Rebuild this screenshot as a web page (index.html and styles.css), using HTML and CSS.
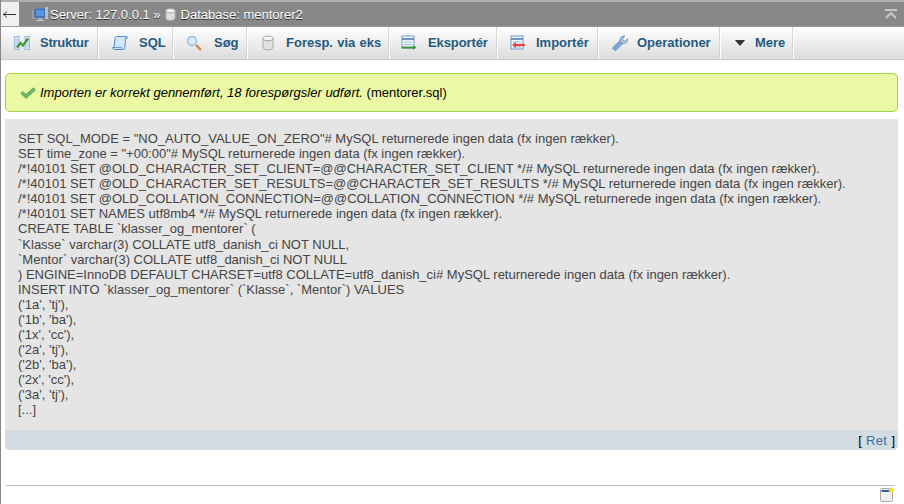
FILE: index.html
```html
<!DOCTYPE html>
<html lang="da">
<head>
<meta charset="utf-8">
<title>phpMyAdmin</title>
<link rel="stylesheet" href="styles.css">
</head>
<body>
<div class="top">
  <a class="back"><svg class="back-ic" viewBox="0 0 13 7"><path d="M0 3.500h13" stroke="#333" stroke-width="1"/><path d="M4 .5L.8 3.500 4 6.500" fill="none" stroke="#333"/></svg></a>
  <svg class="ic16" viewBox="0 0 16 16"><rect x="0" y="4" width="3" height="9" fill="#9aa0a8"/><rect x="2" y="2" width="12" height="10" fill="#3d6fb8" stroke="#8a929c"/><rect x="4" y="4" width="8" height="6" fill="#5b93dd"/><rect x="13" y="1" width="3" height="12" fill="#b8bec6"/><rect x="6" y="12" width="4" height="2" fill="#a8aeb6"/><rect x="4" y="14" width="8" height="1" fill="#c8ccd2"/></svg>
  <span class="crumb">Server: 127.0.0.1 »</span>
  <svg class="ic12" viewBox="0 0 12 14"><ellipse cx="6" cy="3" rx="5" ry="2.400" fill="#f4f4f4" stroke="#aaa"/><path d="M1 3v8c0 1.400 2.200 2.400 5 2.400s5-1 5-2.400V3c0 1.400-2.200 2.400-5 2.400S1 4.400 1 3z" fill="#dedede" stroke="#aaa"/></svg>
  <span class="crumb">Database: mentorer2</span>
  <svg class="collapse" viewBox="0 0 12 10"><path d="M0 1h12" stroke="#c8c8c8" stroke-width="2"/><path d="M1 9l5-5 5 5" fill="none" stroke="#c8c8c8" stroke-width="2"/></svg>
</div>
<nav class="tabs">
  <a class="tab t1"><svg class="ic" viewBox="0 0 16 16"><rect x=".5" y="1.500" width="4.500" height="13" fill="#d5e4f6" stroke="#8fb0d8" stroke-width=".8"/><rect x="11" y="1.500" width="4.500" height="13" fill="#d5e4f6" stroke="#8fb0d8" stroke-width=".8"/><path d="M1 5h4M1 8h4M1 11h4M11 5h4M11 8h4M11 11h4" stroke="#9fbde0" stroke-width=".7"/><path d="M3 12.500L6.500 8l2.500 2.500L14 3.500" fill="none" stroke="#3f9a3a" stroke-width="2.200"/></svg><span>Struktur</span></a>
  <a class="tab t2"><svg class="ic" viewBox="0 0 16 16"><path d="M4.500 1.500c-1 0-1.500 1-1.500 2l-1 9H.7c0 1.300.8 2 2 2H11c1 0 1.700-.7 1.800-2l1-9.500h1.700c0-1-.7-1.500-1.500-1.500z" fill="#d3e5f9" stroke="#4f8ad0"/><path d="M2 12.500h7.500c0 1 .3 1.500 1 2" fill="none" stroke="#4f8ad0" stroke-width=".8"/></svg><span>SQL</span></a>
  <a class="tab t3"><svg class="ic" viewBox="0 0 16 16"><circle cx="6" cy="6" r="4.500" fill="#d8e9fa" stroke="#9db9d6" stroke-width="1.300"/><path d="M10 10l5 5" stroke="#c98a45" stroke-width="2.400"/></svg><span>Søg</span></a>
  <a class="tab t4"><svg class="ic" viewBox="0 0 16 16"><ellipse cx="8" cy="3.500" rx="5" ry="2.400" fill="#f4f4f4" stroke="#aaa"/><path d="M3 3.500v9c0 1.400 2.200 2.400 5 2.400s5-1 5-2.400v-9c0 1.400-2.200 2.400-5 2.400s-5-1-5-2.400z" fill="#e2e2e2" stroke="#aaa"/></svg><span>Foresp. via eks</span></a>
  <a class="tab t5"><svg class="ic" viewBox="0 0 16 16"><rect x="1" y="1" width="12" height="12" fill="#f4f8fd" stroke="#6d97cc"/><path d="M1 4h12" stroke="#6d97cc" stroke-width="2"/><path d="M3 7h8M3 9.500h8" stroke="#9cb8da"/><path d="M1 12.500h12" stroke="#3f9a3a" stroke-width="2"/><path d="M12 10l3.500 2.500L12 15z" fill="#3f9a3a"/></svg><span>Eksportér</span></a>
  <a class="tab t6"><svg class="ic" viewBox="0 0 16 16"><rect x="1" y="1" width="12" height="13" fill="#f4f8fd" stroke="#6d97cc"/><path d="M1 4h12" stroke="#6d97cc" stroke-width="2"/><path d="M3 7h8M3 12h8" stroke="#9cb8da"/><path d="M5 10h10" stroke="#e8413c" stroke-width="2.200"/><path d="M6 7l-4 3 4 3z" fill="#e8413c"/></svg><span>Importér</span></a>
  <a class="tab t7"><svg class="ic" viewBox="0 0 16 16"><path d="M1.500 14.500c-1-1-.8-2 0-2.800L8 5.500c-.5-2.500 1.500-5 5-4.500l-2.300 2.400.5 2 2 .5L15.500 3.500c.5 3.500-2 5.500-4.500 5L4.300 15c-1 .8-1.900.4-2.800-.5z" fill="#7fa3d6" stroke="#6a8cbc" stroke-width=".6"/><path d="M11 1.500l-1 1 .3 3 3 .6 1.500-1.500-1 3-3 .5-2-2 .3-3.500z" fill="#c4c4c4"/></svg><span>Operationer</span></a>
  <a class="tab t8"><svg class="ic arrow" viewBox="0 0 12 8"><path d="M.8 1h10.400L6 7z" fill="#333"/></svg><span>Mere</span></a>
</nav>
<main class="page">
  <div class="notice">
    <svg class="check" viewBox="0 0 16 12"><path d="M.8 6.500L3 4.500l3 3L13.500.8 15.500 3 6 11.500z" fill="#6cba6e" stroke="#3f8f48" stroke-width=".6"/></svg>
    <span class="msg"><em>Importen er korrekt gennemført, 18 forespørgsler udført.</em>&nbsp;(mentorer.sql)</span>
  </div>
  <section class="result">
    <div class="sql">SET SQL_MODE = "NO_AUTO_VALUE_ON_ZERO"# MySQL returnerede ingen data (fx ingen rækker).
SET time_zone = "+00:00"# MySQL returnerede ingen data (fx ingen rækker).
/*!40101 SET @OLD_CHARACTER_SET_CLIENT=@@CHARACTER_SET_CLIENT */# MySQL returnerede ingen data (fx ingen rækker).
/*!40101 SET @OLD_CHARACTER_SET_RESULTS=@@CHARACTER_SET_RESULTS */# MySQL returnerede ingen data (fx ingen rækker).
/*!40101 SET @OLD_COLLATION_CONNECTION=@@COLLATION_CONNECTION */# MySQL returnerede ingen data (fx ingen rækker).
/*!40101 SET NAMES utf8mb4 */# MySQL returnerede ingen data (fx ingen rækker).
CREATE TABLE `klasser_og_mentorer` (
`Klasse` varchar(3) COLLATE utf8_danish_ci NOT NULL,
`Mentor` varchar(3) COLLATE utf8_danish_ci NOT NULL
) ENGINE=InnoDB DEFAULT CHARSET=utf8 COLLATE=utf8_danish_ci# MySQL returnerede ingen data (fx ingen rækker).
INSERT INTO `klasser_og_mentorer` (`Klasse`, `Mentor`) VALUES
('1a', 'tj'),
('1b', 'ba'),
('1x', 'cc'),
('2a', 'tj'),
('2b', 'ba'),
('2x', 'cc'),
('3a', 'tj'),
[...]</div>
    <div class="foot"><span class="br">[</span> <a class="link">Ret</a> <span class="br">]</span></div>
  </section>
</main>
<footer class="bottom">
  <svg class="console" viewBox="0 0 14 15"><rect x=".5" y="1.500" width="12" height="13" rx="1" fill="#f1f1f1" stroke="#aaa"/><rect x="1.500" y="3" width="8" height="2" fill="#2f5f9e"/><circle cx="11.500" cy="3" r="2.500" fill="#f2e33a"/></svg>
</footer>
</body>
</html>
```
FILE: styles.css
```css
* { box-sizing: border-box; }
html, body { margin: 0; height: 100%; }
body {
  width: 904px; height: 504px; overflow: hidden;
  font-family: "Liberation Sans", Arial, sans-serif;
  font-size: 13px; color: #444;
  background: #fff;
  border-left: 1px solid #888;
  display: flex; flex-direction: column;
}
.top {
  height: 27px; margin-left: -1px; flex: none;
  background: #888; border-top: 2px solid #b0b0b0; border-bottom: 1px solid #999;
  display: flex; align-items: center;
  color: #fff; font-size: 13px;
  text-shadow: 0 1px 0 #333;
}
.back {
  width: 19px; height: 24px; background: #f0f0f0;
  display: flex; align-items: center; justify-content: center;
  margin-right: 13px; flex: none;
}
.back-ic { width: 13px; height: 7px; }
.ic16 { width: 16px; height: 16px; margin-right: 2px; flex: none; }
.ic12 { width: 11px; height: 13px; margin: 1px 5px 0 4px; flex: none; }
.crumb { white-space: pre; }
.collapse { width: 12px; height: 10px; margin-left: auto; margin-right: 7px; }
.tabs {
  height: 33px; display: flex; flex: none;
  background: linear-gradient(#fff, #dcdcdc);
  border-bottom: 1px solid #ccc;
}
.tab {
  display: flex; align-items: center;
  border-right: 1px solid #fff; box-shadow: inset -1px 0 0 #d4d4d4;
  font-weight: bold; font-size: 13px; color: #235a81;
  padding-bottom: 1px; flex: none;
}
.ic { width: 16px; height: 16px; flex: none; }
.tab span { white-space: pre; }
.t1 { width: 98px; padding-left: 13px; } .t1 span { margin-left: 10px; letter-spacing: -.25px; }
.t2 { width: 75px; padding-left: 13px; } .t2 span { margin-left: 11px; }
.t3 { width: 74px; padding-left: 12px; } .t3 span { margin-left: 12px; }
.t4 { width: 142px; padding-left: 12px; } .t4 span { margin-left: 10px; word-spacing: .6px; }
.t5 { width: 108px; padding-left: 11px; } .t5 span { margin-left: 11px; letter-spacing: -.1px; }
.t6 { width: 101px; padding-left: 12px; } .t6 span { margin-left: 10px; }
.t7 { width: 122px; padding-left: 13px; } .t7 span { margin-left: 9px; }
.t8 { width: 73px; padding-left: 13px; } .t8 span { margin-left: 7px; }
.arrow { width: 12px; height: 8px; margin-right: 2px; }
.page { flex: 1; padding: 13px 6px 0 4px; }
.notice {
  height: 39px; padding: 0 10px 0 14px;
  background: #ebf8a4; border: 1px solid #a2d246; border-radius: 5px;
  display: flex; align-items: center; color: #000;
  margin-bottom: 7px;
}
.msg { white-space: pre; }
.check { width: 16px; height: 12px; margin-right: 4px; flex: none; }
.result { background: #e5e5e5; border-radius: 0 0 5px 5px; }
.sql {
  padding: 12px 13px 12px; line-height: 15.08px; white-space: pre; color: #444;
  height: 311px;
}
.foot {
  height: 20px; background: #d3dce3; border-radius: 0 0 5px 5px;
  text-align: right; padding: 3px 3px 0; line-height: 15px; color: #000;
  word-spacing: .5px;
}
.link { color: #3f6fa8; letter-spacing: .3px; }
.br { color: #000; }
.bottom {
  height: 19px; flex: none; margin: 0 9px 0 5px;
  border-top: 1px solid #bbb;
  display: flex; justify-content: flex-end;
}
.console { width: 14px; height: 15px; margin-top: 1px; margin-right: 1px; }
```
